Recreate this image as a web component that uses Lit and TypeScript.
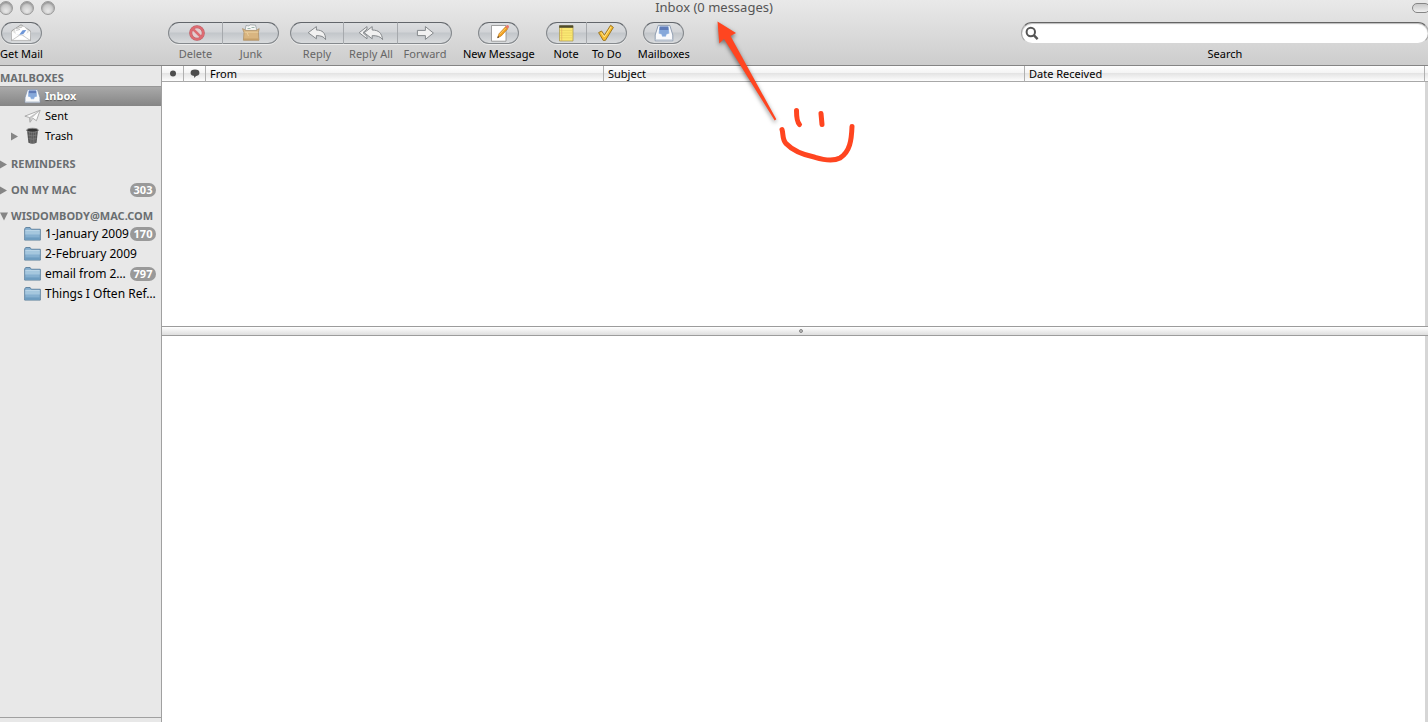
import { LitElement, html, css, svg, nothing } from "lit";
import type { SVGTemplateResult } from "lit";
import { customElement, property } from "lit/decorators.js";

type IconName =
  | "getmail" | "delete" | "junk" | "reply" | "replyall" | "forward"
  | "compose" | "note" | "todo" | "tray" | "sent" | "trash" | "folder";

/* Every glyph is drawn on a 20x18 canvas. */
const ICONS: Record<IconName, SVGTemplateResult> = {
  getmail: svg`
    <path d="M0.5 7 10 .8 19.5 7V16.5H.5Z" fill="#e9e9e6" stroke="#8d8d8d" stroke-width=".8"/>
    <path d="M3.5 5 13 2.2 17 6.5 15.5 11H4.5Z" fill="#fff" stroke="#c4c4c4" stroke-width=".5"/>
    <path d="M5 4.8 11 3.2M5.2 6.4 9 5.4" stroke="#b9b9b9" stroke-width=".8"/>
    <path d="M.6 7.2 8 12 .8 16.4ZM19.4 7.2 12 12l7.2 4.4Z" fill="#fdfdfd"/>
    <path d="M.8 16.4 8.6 11.2Q10 10.4 11.4 11.2L19.2 16.4Z" fill="#fff" stroke="#b5b5b5" stroke-width=".7"/>
    <path d="M8.2 10.8 11.6 6.2 15.4 6 12.4 10Z" fill="#6d96d8"/>`,
  delete: svg`
    <circle cx="11" cy="9" r="6.3" fill="#e3cdd0" stroke="#b95f66" stroke-width="3"/>
    <circle cx="11" cy="9" r="6.3" fill="none" stroke="#dd6b72" stroke-width="2.1"/>
    <path d="m6.8 4.8 8.4 8.4" stroke="#dd6b72" stroke-width="2.6"/>`,
  junk: svg`
    <path d="M4 7 5 1.5 8 2 9 .8 14.5 1.2 16 7Z" fill="#f7f7f7" stroke="#8e9698" stroke-width=".7"/>
    <path d="M6.5 4.5h3M10.5 3.5h3" stroke="#9cb6ac" stroke-width="1"/>
    <path d="M1.5 4.6 5 6.4H15.4L18.2 4.6 17.4 8.5 18 16.3H2.4L3 8.5Z" fill="#d9b580" stroke="#a98b60" stroke-width=".7"/>
    <path d="M3.5 8.2H17M6 8.4 7.5 12" fill="none" stroke="#ebd0a0" stroke-width=".9"/>
    <path d="M3 14.5H17.5V16H3Z" fill="#c59f69"/>`,
  reply: svg`
    <path d="M1.2 8.7 9.4 2.6V6C15.5 6 18.6 9 18.6 15.6 16.8 12.6 14 11.6 9.4 11.6V14.8Z" fill="#f1f1f1" stroke="#85898c" stroke-width="1" stroke-linejoin="round"/>`,
  replyall: svg`
    <path d="M-1.8 8.7 6 2.6V5L2 8.7 6 12.4V14.8Z" fill="#f1f1f1" stroke="#85898c" stroke-linejoin="round"/>
    <path d="M3.2 8.7 11.2 2.6V6C17.6 6 20.8 9 21.6 15.6 19.6 12.6 16.4 11.6 11.2 11.6V14.8Z" fill="#f1f1f1" stroke="#85898c" stroke-linejoin="round"/>`,
  forward: svg`
    <path d="M2.4 6.4H10.4V2.6L18.4 9 10.4 15.4V11.6H2.4Z" fill="#f1f1f1" stroke="#85898c" stroke-width="1" stroke-linejoin="round"/>`,
  compose: svg`
    <path d="M2.5 1.5H17V17.2H2.5Z" fill="#fff" stroke="#8c8c8c" stroke-width=".8"/>
    <path d="M8.6 13.8 10 9.8 16.5 2.8 18.8 4.8 12.2 12Z" fill="#f4a321" stroke="#b36d12" stroke-width=".6"/>
    <path d="m16.4 2.8 1.5-1.5q.8-.5 1.6.2.9.8.3 1.7l-1.1 1.5Z" fill="#e8776b"/>
    <path d="M8.4 14 9 12.1 10.2 13.2Z" fill="#333"/>
    <path d="m10.6 10.4 6-6.2" stroke="#ffd479" stroke-width=".8"/>`,
  note: svg`
    <path d="M3.5 2H17V17H3.5Z" fill="#fbe973" stroke="#a8974a" stroke-width=".7"/>
    <path d="M3.2 1.3H17.2V3.8H3.2Z" fill="#4f4b2c"/>
    <path d="M4 6.6H16.6M4 9H16.6M4 11.4H16.6M4 13.8H16.6" stroke="#e2cb60" stroke-width=".6"/>
    <path d="M5.7 4V17" stroke="#e6a55e" stroke-width=".6"/>`,
  todo: svg`
    <path d="M2.6 8.6 5.6 7 8.4 11.2 14.6 1.2 17.4 3.4 9.4 16.4H7.2Z" fill="#f7bd31" stroke="#936d1c" stroke-width=".9" stroke-linejoin="round"/>
    <path d="M5.4 8.6 8.3 13 15 3" fill="none" stroke="#ffe693" stroke-width="1"/>`,
  tray: svg`
    <path d="M4.2 1.4H15.8L18.8 11V16.8H1.2V11Z" fill="#f8f9fb" stroke="#8796ac" stroke-width=".9" stroke-linejoin="round"/>
    <path d="M5.4 2.4H14.6L15.4 9.6 12.6 10.4 11.8 12.8H8.2L7.4 10.4 4.6 9.6Z" fill="#a3c0e6"/>
    <path d="M5.8 2.6H14.2L14.5 6H5.5Z" fill="#5f7bb8"/>
    <path d="M5.5 6H14.5L14.6 9.2 12.2 10 11.6 12H8.4L7.8 10 5.4 9.2Z" fill="#86a8da"/>
    <path d="M1.6 15.2H18.4V16.4H1.6Z" fill="#cbd3dd"/>`,
  sent: svg`
    <path d="M1 9.2 19 2.2 14.6 14.6 10.4 11.6 7.2 16.4 6.4 10.8Z" fill="#fbfbfb" stroke="#999" stroke-width=".9" stroke-linejoin="round"/>
    <path d="M6.4 10.8 17.8 3.2 8.8 11.4 7.2 16.2Z" fill="#c8c8c8" stroke="#aaa" stroke-width=".5"/>`,
  trash: svg`
    <path d="M3.6 2.4 5.2 17Q10 19.2 14.8 17L16.4 2.4Z" fill="#555"/>
    <path d="M6.5 4 7.6 17.2M9 4 9.4 17.8M11.4 4 11 17.8M13.8 4 12.6 17.2M5 8Q10 9.6 15 8M5.2 12Q10 13.4 14.8 12" fill="none" stroke="#8a8a8a" stroke-width=".6"/>
    <ellipse cx="10" cy="2.2" rx="7" ry="2.3" fill="#343434" stroke="#8a8a8a" stroke-width="1.1"/>`,
  folder: svg`
    <path d="M.8 16.2V3L2 1.4H7.2L8.6 3.4H19.2V16.2Z" fill="#86b0d0" stroke="#48708f" stroke-width=".9" stroke-linejoin="round"/>
    <path d="M1.4 5.4H18.6V9.6H1.4Z" fill="#a5c7de"/>
    <path d="M1.4 4.8H18.6" stroke="#d0e4f1" stroke-width=".9"/>
    <path d="M1.4 13H18.6V15.7H1.4Z" fill="#6d9cc0"/>`,
};

const icon = (name: IconName, width = 20, height = 18) => html`
  <svg class="icon" width=${width} height=${height} viewBox="0 0 20 18" overflow="visible" aria-hidden="true">${ICONS[name]}</svg>`;

type Size = "small" | "medium" | "large" | "wide";
interface Tool { label: string; icon: IconName; size?: Size; disabled?: boolean; }

const TOOL_GROUPS: Tool[][] = [
  [
    { label: "Delete", icon: "delete", size: "large", disabled: true },
    { label: "Junk", icon: "junk", size: "wide", disabled: true },
  ],
  [
    { label: "Reply", icon: "reply", size: "medium", disabled: true },
    { label: "Reply All", icon: "replyall", size: "medium", disabled: true },
    { label: "Forward", icon: "forward", size: "medium", disabled: true },
  ],
  [{ label: "New Message", icon: "compose" }],
  [{ label: "Note", icon: "note" }, { label: "To Do", icon: "todo", size: "small" }],
  [{ label: "Mailboxes", icon: "tray" }],
];

@customElement("tool-group")
export class ToolGroup extends LitElement {
  @property({ attribute: false }) tools: Tool[] = [];

  static styles = css`
    :host { display: flex; }
    .tool {
      display: flex; flex-direction: column; align-items: center; gap: 3px;
      margin: 0; padding: 0; border: 0; background: none; color: #000;
      font: 11px/14px "Noto Sans", "Open Sans", sans-serif; white-space: nowrap;
    }
    .tool:disabled { color: #666; }
    .face {
      box-sizing: border-box; display: grid; place-items: center;
      width: 41px; height: 22px;
      border: 1px solid #85898d; border-top-color: #62666b; border-left-width: 0;
      background: linear-gradient(#dcdee0, #d2d4d7 45%, #c2c6ca 50%, #d9dbdd);
      box-shadow: 0 1px 0 #ededed;
    }
    .small { width: 40px; }
    .medium { width: 54px; }
    .large { width: 55px; }
    .wide { width: 56px; }
    .tool:not(:last-child) .face { border-right-color: #a6a9ad; }
    .tool:first-child .face { border-left-width: 1px; border-radius: 11px 0 0 11px; }
    .tool:last-child .face { border-radius: 0 11px 11px 0; }
    .tool:only-child .face { border-radius: 11px; }
  `;

  render() {
    return this.tools.map((t) => html`
      <button class="tool" type="button" ?disabled=${t.disabled ?? false}>
        <span class="face ${t.size ?? ""}">${icon(t.icon)}</span>
        <span>${t.label}</span>
      </button>`);
  }
}

@customElement("mail-sidebar")
export class MailSidebar extends LitElement {
  static styles = css`
    :host {
      display: flex; flex-direction: column; box-sizing: border-box;
      background: #e8e8e8; border-right: 1px solid #a0a0a0;
      font: 11px/20px "Noto Sans", "Open Sans", sans-serif;
    }
    nav { flex: 1; padding-top: 4px; }
    h2 {
      display: flex; align-items: center; margin: 0; height: 16px;
      font-size: 11px; line-height: 16px; font-weight: 700; color: #6a6e71;
      white-space: nowrap;
    }
    .closed { margin: 10px 0; }
    ul { list-style: none; margin: 0; padding: 0; }
    .row { display: flex; align-items: center; height: 20px; padding: 0 5px 0 11px; }
    .folders { font-size: 12px; }
    .selected {
      color: #fff; font-weight: 700;
      background: linear-gradient(#ababab, #858585); box-shadow: inset 0 1px 0 #979797;
      text-shadow: 0 1px 1px #555;
    }
    .box {
      display: flex; align-items: center; flex: 1; min-width: 0; gap: 4px;
      margin: 0; padding: 0; border: 0; background: none; color: inherit;
      font: inherit; text-shadow: inherit; text-align: left;
    }
    .icon { flex: none; }
    .name { flex: 1; white-space: nowrap; }
    .twist {
      flex: none; display: flex; align-items: center; width: 11px; height: 12px;
      margin: 0; padding: 0; border: 0; background: none;
    }
    .gap, .row .twist { flex: none; width: 13px; }
    .badge {
      flex: none; width: 26px; height: 14px; border-radius: 7px; margin-left: auto;
      background: #999; color: #fff; text-align: center;
      font: 700 11px/14px "Noto Sans", sans-serif;
    }
    .row .badge { margin-left: 0; }
    h2 .badge { margin-right: 5px; }
    .footer { height: 4px; border-top: 1px solid #a0a0a0; }
  `;

  private twist(open: boolean, label: string) {
    return html`<button class="twist" type="button" aria-expanded=${open ? "true" : "false"} aria-label=${label}>
      <svg width="9" height="9" viewBox="0 0 9 9" aria-hidden="true">
        <path d=${open ? "M0 .5H8L4 8.5Z" : "M0 .5 7 4.5 0 8.5Z"} fill="#858585"/>
      </svg></button>`;
  }

  private row(name: string, glyph: IconName, opts: { selected?: boolean; twist?: boolean; count?: number } = {}) {
    return html`<li class="row ${opts.selected ? "selected" : ""}">
      ${opts.twist ? this.twist(false, `Expand ${name}`) : html`<span class="gap"></span>`}
      <button class="box" type="button">${icon(glyph, 17, 16)}<span class="name">${name}</span></button>
      ${opts.count ? html`<span class="badge">${opts.count}</span>` : nothing}
    </li>`;
  }

  render() {
    return html`
      <nav aria-label="Mailboxes">
        <h2>MAILBOXES</h2>
        <ul>
          ${this.row("Inbox", "tray", { selected: true })}
          ${this.row("Sent", "sent")}
          ${this.row("Trash", "trash", { twist: true })}
        </ul>
        <h2 class="closed">${this.twist(false, "Expand reminders")}REMINDERS</h2>
        <h2 class="closed">${this.twist(false, "Expand On My Mac")}ON MY MAC<span class="badge">303</span></h2>
        <h2>${this.twist(true, "Collapse account")}WISDOMBODY@MAC.COM</h2>
        <ul class="folders">
          ${this.row("1-January 2009", "folder", { count: 170 })}
          ${this.row("2-February 2009", "folder")}
          ${this.row("email from 2…", "folder", { count: 797 })}
          ${this.row("Things I Often Ref…", "folder")}
        </ul>
      </nav>
      <div class="footer"></div>`;
  }
}

@customElement("app-root")
export class AppRoot extends LitElement {
  static styles = css`
    :host {
      position: relative; display: flex; flex-direction: column;
      height: 100vh; overflow: hidden; background: #fff; color: #000;
      font: 11px/14px "Noto Sans", "Open Sans", sans-serif;
    }
    header { background: linear-gradient(#e9e9e9, #cdcdcd); border-bottom: 1px solid #858585; }
    .titlebar {
      display: grid; grid-template-columns: 1fr auto 1fr; align-items: center; height: 15px;
    }
    .lights { display: flex; gap: 7px; margin-left: -1px; }
    .light {
      width: 14px; height: 14px; padding: 0; border: 1px solid #999; border-radius: 50%;
      background: radial-gradient(circle at 50% 75%, #e8e8e8, #bdbdbd 80%);
      box-shadow: inset 0 1px 2px #888;
    }
    h1 { margin: 0; font-size: 13px; line-height: 15px; font-weight: 400; color: #555; }
    .pill {
      justify-self: end; width: 18px; height: 10px; margin-right: -2px; padding: 0;
      border: 1px solid #858585; border-radius: 5px; background: linear-gradient(#c9c9c9, #efefef);
    }
    .toolbar { display: flex; gap: 11px; padding: 7px 0 4px; }
    .get { flex: none; display: flex; width: 157px; }
    .search {
      display: flex; flex-direction: column-reverse; align-items: center; gap: 3px;
      width: 408px; margin: 0 -1px 0 auto;
    }
    .field { position: relative; width: 100%; height: 22px; }
    .field input {
      box-sizing: border-box; width: 100%; height: 22px; margin: 0; padding: 0 12px 0 24px;
      border: 1px solid #a6a6a6; border-top: 1px solid #646464; border-bottom-color: #d6d6d6;
      border-radius: 11px; background: #fff; box-shadow: inset 0 1px 1px #bbb; font: inherit; outline: none;
    }
    .glass { position: absolute; left: 4px; top: 4px; }
    .body { flex: 1; min-height: 0; display: grid; grid-template-columns: 162px minmax(0, 1fr); }
    main { display: grid; grid-template-rows: minmax(0, 260fr) 10px minmax(0, 386fr); min-height: 0; }
    .pane { border-right: 3px solid #d6d6d6; }
    .list { display: flex; flex-direction: column; }
    table { width: calc(100% + 3px); table-layout: fixed; border-collapse: separate; border-spacing: 0; }
    .dot-col { width: 22px; }
    .from-col { width: 398px; }
    .subject-col { width: 421px; }
    .end-col { width: 3px; }
    th {
      box-sizing: border-box; height: 16px; padding: 0 4px; line-height: 14px;
      text-align: left; font-weight: 400;
      border-right: 1px solid #b0b0b0; border-bottom: 1px solid #a8a8a8;
      background: linear-gradient(#fff, #f4f4f4 45%, #e4e4e4 50%, #fdfdfd);
    }
    th.mark { padding: 0; text-align: center; }
    th.mark svg { display: block; margin: 0 auto; }
    th.end { padding: 0; border-right: 0; }
    .splitter {
      box-sizing: border-box; display: grid; place-items: center; padding-left: 12px;
      border: solid #9c9c9c; border-width: 1px 0; background: linear-gradient(#fff, #dedede);
    }
    .grip { width: 2px; height: 2px; border: 1px solid #858585; border-radius: 50%; background: #bbb; }
    .scribble { position: absolute; left: 700px; top: 0; pointer-events: none; }
    .arrow { filter: drop-shadow(0 2px 2px rgba(0, 0, 0, 0.5)); }
  `;

  render() {
    return html`
      <header>
        <div class="titlebar">
          <div class="lights">
            <button class="light" type="button" aria-label="Close"></button>
            <button class="light" type="button" aria-label="Minimize"></button>
            <button class="light" type="button" aria-label="Zoom"></button>
          </div>
          <h1>Inbox (0 messages)</h1>
          <button class="pill" type="button" aria-label="Toggle toolbar"></button>
        </div>
        <div class="toolbar">
          <div class="get"><tool-group .tools=${[{ label: "Get Mail", icon: "getmail" }]}></tool-group></div>
          ${TOOL_GROUPS.map((g) => html`<tool-group .tools=${g}></tool-group>`)}
          <div class="search">
            <label for="search">Search</label>
            <div class="field">
              <input id="search" type="text">
              <svg class="glass" width="14" height="15" viewBox="0 0 14 15" aria-hidden="true">
                <circle cx="5.8" cy="6" r="4.2" fill="none" stroke="#555" stroke-width="2"/>
                <path d="m8.8 9.2 3.8 3.9" stroke="#555" stroke-width="2.4"/>
              </svg>
            </div>
          </div>
        </div>
      </header>
      <div class="body">
        <mail-sidebar></mail-sidebar>
        <main>
          <section class="pane list" aria-label="Messages">
            <table>
              <colgroup>
                <col class="dot-col"><col class="dot-col"><col class="from-col"><col class="subject-col"><col><col class="end-col">
              </colgroup>
              <thead>
                <tr>
                  <th class="mark" aria-label="Unread"><svg width="8" height="8" viewBox="0 0 8 8"><circle cx="4" cy="3.5" r="3" fill="#4d4d4d"/></svg></th>
                  <th class="mark" aria-label="Chat"><svg width="10" height="9" viewBox="0 0 10 9"><ellipse cx="5" cy="3.8" rx="4.4" ry="3.3" fill="#4d4d4d"/><path d="M4 6 4.2 9 7 6Z" fill="#4d4d4d"/></svg></th>
                  <th>From</th>
                  <th>Subject</th>
                  <th>Date Received</th>
                  <th class="end"></th>
                </tr>
              </thead>
            </table>
          </section>
          <div class="splitter" role="separator"><span class="grip"></span></div>
          <section class="pane" aria-label="Message"></section>
        </main>
      </div>
      <svg class="scribble" width="170" height="170" viewBox="700 0 170 170" aria-hidden="true">
        <path class="arrow" d="M717.5 21.5 736 33 730.5 36 776.3 119.3 774.7 120.5 724 39 719.3 43.5Z" fill="#ff4520"/>
        <g fill="none" stroke="#ff4520" stroke-linecap="round" stroke-linejoin="round">
          <path d="M796.5 110.5C796.5 117 797 122 799.5 124.5" stroke-width="5"/>
          <path d="M821 113.5 822 124.5" stroke-width="5"/>
          <path d="M782 129.5C783.5 134 782 139 786 143.5C793 151 804 155 815 157.3C824 160 833 161.5 840 158C850 152 851.5 140 852 126.5" stroke-width="5"/>
        </g>
      </svg>`;
  }
}
